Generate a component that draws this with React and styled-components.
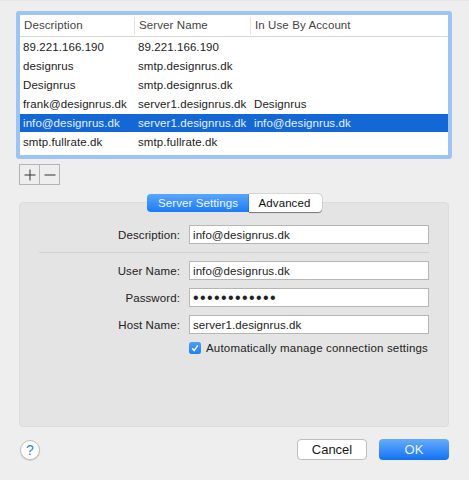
import React from "react";
import styled, { createGlobalStyle } from "styled-components";

const Global = createGlobalStyle`
  html, body { margin: 0; padding: 0; background: #eeeeee; }
  * { box-sizing: border-box; }
`;

const Sheet = styled.div`
  width: 469px;
  height: 480px;
  overflow: hidden;
  background: #eeeeee;
  border-top: 1px solid #e6e6e6;
  padding-top: 10px;
  font-family: "Liberation Sans", Arial, sans-serif;
  font-size: 11.5px;
  color: #222;
  display: flex;
  flex-direction: column;
`;

const TableFrame = styled.div`
  width: 436px;
  height: 148px;
  margin-left: 16px;
  border: 4px solid #9cc5f3;
  border-radius: 3px;
  background: #fff;
`;

const columns = "114px 116px 1fr";

const HeaderRow = styled.div`
  display: grid;
  grid-template-columns: ${columns};
  height: 22px;
  border-bottom: 1px solid #d6d6d6;
  align-items: center;
`;

const HeaderCell = styled.div`
  height: 17px;
  line-height: 17px;
  padding-left: 4px;
  color: #444;
  letter-spacing: 0.1px;
  border-left: ${(p) => (p.$first ? "none" : "1px solid #e2e2e2")};
`;

const Body = styled.div`
  padding-top: 1px;
`;

const Row = styled.div`
  display: grid;
  grid-template-columns: ${columns};
  height: 19px;
  line-height: 19px;
  letter-spacing: 0.08px;
  border-bottom: 1px solid transparent;
  background-clip: padding-box;
  background-color: ${(p) => (p.$selected ? "#1468d6" : "transparent")};
  color: ${(p) => (p.$selected ? "#e6f0ff" : "#1c1c1c")};
`;

const Cell = styled.div`
  padding-left: ${(p) => (p.$first ? "3px" : "4px")};
  white-space: nowrap;
  overflow: hidden;
`;

const PlusMinus = styled.div`
  display: flex;
  width: 41px;
  height: 21px;
  margin: 5px 0 0 19px;
  border: 1px solid #b4b4b4;
`;

const PlusMinusButton = styled.div`
  flex: 1;
  display: flex;
  align-items: center;
  justify-content: center;
  & + & { border-left: 1px solid #b4b4b4; }
`;

const TabBar = styled.div`
  display: flex;
  width: 175px;
  height: 18px;
  margin: 9px 0 -10px 147px;
  position: relative;
  z-index: 1;
`;

const Tab = styled.div`
  display: flex;
  align-items: center;
  justify-content: center;
  width: ${(p) => (p.$active ? "102px" : "73px")};
  padding-right: ${(p) => (p.$active ? "0" : "2px")};
  letter-spacing: 0.1px;
  border-radius: ${(p) => (p.$active ? "4px 0 0 4px" : "0 4px 4px 0")};
  background: ${(p) => (p.$active ? "linear-gradient(#5aa6fb, #1b7cf6)" : "#fff")};
  color: ${(p) => (p.$active ? "#f0f6ff" : "#111")};
  box-shadow: ${(p) => (p.$active ? "none" : "0 0.5px 1px rgba(0,0,0,.45), 0 0 0 .5px rgba(0,0,0,.12)")};
`;

const Panel = styled.div`
  width: 430px;
  height: 225px;
  margin-left: 19px;
  border: 1px solid #dcdcdc;
  border-radius: 4px;
  background: #e4e4e4;
  padding: 22px 19px 0 19px;
`;

const FormRow = styled.div`
  display: flex;
  align-items: center;
  height: 19px;
  margin-bottom: 8px;
`;

const Label = styled.label`
  width: 150px;
  padding-right: 9px;
  text-align: right;
  color: #222;
  letter-spacing: 0.1px;
`;

const Input = styled.input`
  width: 240px;
  height: 19px;
  border: 1px solid #b6b6b6;
  border-radius: 0;
  background: #fff;
  padding: 1px 3px 0;
  margin: 0;
  outline: none;
  font-family: inherit;
  font-size: ${(p) => (p.type === "password" ? "16px" : "11.5px")};
  color: #222;
  letter-spacing: ${(p) => (p.type === "password" ? "1.4px" : "0.08px")};
`;

const Divider = styled.div`
  height: 1px;
  background: #d2d2d2;
  margin-bottom: 8px;
`;

const CheckRow = styled.div`
  display: flex;
  align-items: center;
  margin: 0 0 0 150px;
  height: 12px;
  gap: 5px;
  letter-spacing: 0.18px;
  white-space: nowrap;
`;

const CheckBox = styled.span`
  width: 12px;
  height: 12px;
  flex: none;
  border-radius: 2.5px;
  background: linear-gradient(#4d9efa, #1f7ff4);
  display: flex;
  align-items: center;
  justify-content: center;
`;

const Footer = styled.div`
  display: flex;
  align-items: center;
  margin: 12px 0 0 20px;
  width: 429px;
  height: 21px;
`;

const Help = styled.div`
  width: 20px;
  height: 20px;
  border-radius: 50%;
  background: #fff;
  border: 1px solid #c0c0c0;
  box-shadow: 0 1px 1px rgba(0,0,0,.15);
  color: #2b84f0;
  font-size: 14px;
  display: flex;
  align-items: center;
  justify-content: center;
  margin-top: 1px;
  margin-right: auto;
`;

const Button = styled.div`
  width: 70px;
  height: 21px;
  display: flex;
  align-items: center;
  justify-content: center;
  font-size: 13px;
  border-radius: 4px;
  margin-left: ${(p) => (p.$primary ? "12px" : "0")};
  background: ${(p) => (p.$primary ? "linear-gradient(#66acfb, #1272f5)" : "#fff")};
  color: ${(p) => (p.$primary ? "#eaf3ff" : "#1a1a1a")};
  border: ${(p) => (p.$primary ? "none" : "1px solid #bdbdbd")};
`;

const rows = [
  ["89.221.166.190", "89.221.166.190", ""],
  ["designrus", "smtp.designrus.dk", ""],
  ["Designrus", "smtp.designrus.dk", ""],
  ["frank@designrus.dk", "server1.designrus.dk", "Designrus"],
  ["info@designrus.dk", "server1.designrus.dk", "info@designrus.dk"],
  ["smtp.fullrate.dk", "smtp.fullrate.dk", ""],
];

export default function App() {
  return (
    <Sheet>
      <Global />
      <TableFrame>
        <HeaderRow>
          <HeaderCell $first>Description</HeaderCell>
          <HeaderCell>Server Name</HeaderCell>
          <HeaderCell>In Use By Account</HeaderCell>
        </HeaderRow>
        <Body>
          {rows.map((r, i) => (
            <Row key={i} $selected={i === 4}>
              <Cell $first>{r[0]}</Cell>
              <Cell>{r[1]}</Cell>
              <Cell>{r[2]}</Cell>
            </Row>
          ))}
        </Body>
      </TableFrame>
      <PlusMinus>
        <PlusMinusButton>
          <svg width="12" height="12" viewBox="0 0 12 12">
            <path d="M6 0.5V11.5M0.5 6H11.5" stroke="#333" strokeWidth="1" fill="none" />
          </svg>
        </PlusMinusButton>
        <PlusMinusButton>
          <svg width="12" height="12" viewBox="0 0 12 12">
            <path d="M0.5 6H11.5" stroke="#333" strokeWidth="1" fill="none" />
          </svg>
        </PlusMinusButton>
      </PlusMinus>
      <TabBar>
        <Tab $active>Server Settings</Tab>
        <Tab>Advanced</Tab>
      </TabBar>
      <Panel>
        <FormRow>
          <Label>Description:</Label>
          <Input readOnly value="info@designrus.dk" />
        </FormRow>
        <Divider />
        <FormRow>
          <Label>User Name:</Label>
          <Input readOnly value="info@designrus.dk" />
        </FormRow>
        <FormRow>
          <Label>Password:</Label>
          <Input readOnly type="password" value="abcdefghijkl" />
        </FormRow>
        <FormRow>
          <Label>Host Name:</Label>
          <Input readOnly value="server1.designrus.dk" />
        </FormRow>
        <CheckRow>
          <CheckBox>
            <svg width="10" height="10" viewBox="0 0 10 10">
              <path d="M2.2 5.2L4.2 7.6L7.8 2.4" stroke="#fff" strokeWidth="1.5" fill="none" />
            </svg>
          </CheckBox>
          Automatically manage connection settings
        </CheckRow>
      </Panel>
      <Footer>
        <Help>?</Help>
        <Button>Cancel</Button>
        <Button $primary>OK</Button>
      </Footer>
    </Sheet>
  );
}
